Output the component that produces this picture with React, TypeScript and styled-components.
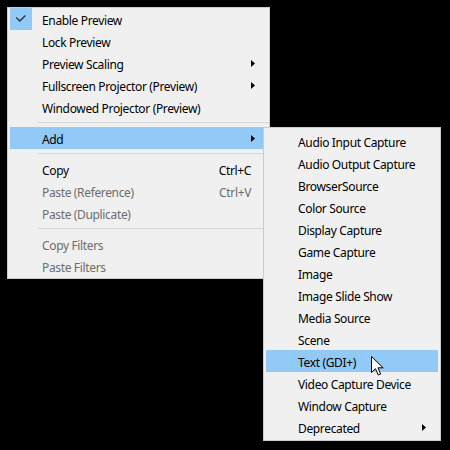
import React from "react";
import styled, { createGlobalStyle } from "styled-components";

const GlobalStyle = createGlobalStyle`
  html, body { margin: 0; padding: 0; background: #000; }
  body { font-family: "Noto Sans", "Liberation Sans", sans-serif; }
  * { box-sizing: border-box; }
`;

const Screen = styled.div`
  position: relative;
  width: 450px;
  height: 450px;
  background: #000;
  overflow: hidden;
`;

const Menu = styled.div<{ $left: number; $top: number; $width: number; $pad: number }>`
  position: absolute;
  left: ${(p) => p.$left}px;
  top: ${(p) => p.$top}px;
  width: ${(p) => p.$width}px;
  background: #f0f0f0;
  border: 1px solid #cccccc;
  padding: ${(p) => p.$pad}px 0;
  display: flex;
  flex-direction: column;
`;

const Row = styled.div<{ $active?: boolean; $disabled?: boolean }>`
  height: 22px;
  margin: 0 2px;
  display: grid;
  grid-template-columns: 32px 1fr auto 16px;
  align-items: center;
  background: ${(p) => (p.$active ? "#91c9f7" : "transparent")};
  color: ${(p) => (p.$disabled ? "#6d6d6d" : "#000")};
  font-size: 12px;
  letter-spacing: -0.35px;
  white-space: nowrap;
`;

const CheckBox = styled.div`
  width: 22px;
  height: 22px;
  background: #91c9f7;
  display: flex;
  align-items: center;
  justify-content: center;
`;

const Label = styled.span`
  display: block;
  height: 22px;
  line-height: 19px;
  padding-top: 3px;
`;

const Shortcut = styled(Label)``;

const ArrowSlot = styled.div`
  display: flex;
  align-items: center;
  height: 22px;
`;

const Separator = styled.div`
  height: 9px;
  display: flex;
  align-items: center;
  padding-left: 30px;
  &::after {
    content: "";
    flex: 1;
    height: 1px;
    background: #d7d7d7;
  }
`;

const Cursor = styled.svg`
  position: absolute;
  left: 371px;
  top: 356px;
`;

const Arrow = () => (
  <svg width="4" height="7" viewBox="0 0 4 7">
    <path d="M0 0 L4 3.5 L0 7 Z" fill="#000" />
  </svg>
);

type Item = { label: string; shortcut?: string; sub?: boolean; disabled?: boolean; checked?: boolean; active?: boolean } | "sep";

const mainItems: Item[] = [
  { label: "Enable Preview", checked: true },
  { label: "Lock Preview" },
  { label: "Preview Scaling", sub: true },
  { label: "Fullscreen Projector (Preview)", sub: true },
  { label: "Windowed Projector (Preview)" },
  "sep",
  { label: "Add", sub: true, active: true },
  "sep",
  { label: "Copy", shortcut: "Ctrl+C" },
  { label: "Paste (Reference)", shortcut: "Ctrl+V", disabled: true },
  { label: "Paste (Duplicate)", disabled: true },
  "sep",
  { label: "Copy Filters", disabled: true },
  { label: "Paste Filters", disabled: true },
];

const subItems: Item[] = [
  { label: "Audio Input Capture" },
  { label: "Audio Output Capture" },
  { label: "BrowserSource" },
  { label: "Color Source" },
  { label: "Display Capture" },
  { label: "Game Capture" },
  { label: "Image" },
  { label: "Image Slide Show" },
  { label: "Media Source" },
  { label: "Scene" },
  { label: "Text (GDI+)", active: true },
  { label: "Video Capture Device" },
  { label: "Window Capture" },
  { label: "Deprecated", sub: true },
];

const renderItems = (items: Item[]) =>
  items.map((it, i) =>
    it === "sep" ? (
      <Separator key={i} />
    ) : (
      <Row key={i} $active={it.active} $disabled={it.disabled}>
        <div>
          {it.checked && (
            <CheckBox>
              <svg width="22" height="22" viewBox="0 0 22 22">
                <path d="M6.2 9.6 L9.8 13 L15.4 7.6" fill="none" stroke="#333" strokeWidth="1.4" />
              </svg>
            </CheckBox>
          )}
        </div>
        <Label>{it.label}</Label>
        <Shortcut>{it.shortcut}</Shortcut>
        <ArrowSlot>{it.sub && <Arrow />}</ArrowSlot>
      </Row>
    )
  );

export default function App() {
  return (
    <Screen>
      <GlobalStyle />
      <Menu $left={7} $top={7} $width={263} $pad={0}>
        {renderItems(mainItems)}
        <div style={{ height: 1 }} />
      </Menu>
      <Menu $left={263} $top={127} $width={178} $pad={2}>
        {renderItems(subItems)}
      </Menu>
      <Cursor width="14" height="22" viewBox="0 0 14 22">
        <path
          d="M0.5 0.5 L0.5 16.5 L4.5 12.7 L7.2 19 L9.6 18 L7 11.8 L12.2 11.8 Z"
          fill="#fff"
          stroke="#000"
          strokeWidth="1"
          strokeLinejoin="miter"
        />
      </Cursor>
    </Screen>
  );
}
